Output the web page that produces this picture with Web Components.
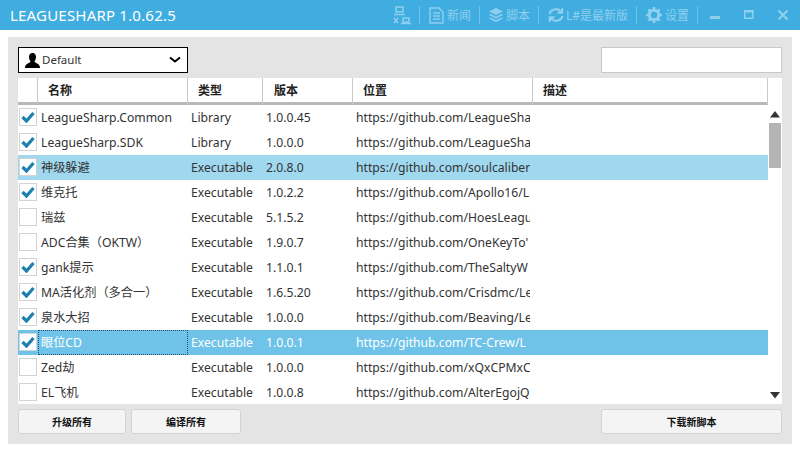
<!DOCTYPE html>
<html><head><meta charset="utf-8"><style>
html,body{margin:0;padding:0;background:#fff}
body{width:800px;height:450px;overflow:hidden;font-family:"Noto Sans","Noto Sans CJK SC",sans-serif}
</style></head><body>
<ls-app></ls-app>
<script>
const F='"Noto Sans","Noto Sans CJK SC",sans-serif';
class LsTitle extends HTMLElement{constructor(){super();this.attachShadow({mode:'open'}).innerHTML=`<style>
:host{display:flex;height:30px;background:#3fade0;align-items:center;color:#fff;font-family:${F}}
.t{font-size:15px;padding-left:10px;flex:1;white-space:nowrap;letter-spacing:.2px}
.n{display:flex;align-items:center;color:#8fd0ee;font-size:12px;height:30px}
.n svg{display:block}
.i{display:flex;align-items:center;gap:2px}
.s{width:1px;height:18px;background:#70c2e8;margin:0 8px 0 8px}
.s.l{margin-right:0}
.w{display:flex;align-items:center;justify-content:center;width:34px}
</style><div class="t">LEAGUESHARP 1.0.62.5</div><div class="n">
<div class="i"><svg width="18" height="20" viewBox="0 0 18 20" fill="none" stroke="#8fd0ee" stroke-width="1.500"><rect x="3" y="2" width="7" height="5"/><path d="M1 9.500h11"/><rect x="10" y="13" width="6" height="4"/><path d="M8 18.500h10M1 13l4 5M5 13l-4 5"/></svg></div><div class="s"></div>
<div class="i"><svg width="17" height="17" viewBox="0 0 17 17" fill="none" stroke="#8fd0ee" stroke-width="1.400"><path d="M2 1h9l4 4v11H2z"/><path d="M5 6h7M5 9h7M5 12h7"/></svg>新闻</div><div class="s"></div>
<div class="i"><svg width="16" height="16" viewBox="0 0 16 16" fill="#8fd0ee"><path d="M8 1l7 3.500L8 8 1 4.500z"/><path d="M2.500 7L8 9.800 13.500 7 15 8 8 11.500 1 8z"/><path d="M2.500 10.500L8 13.300l5.500-2.800L15 11.500 8 15 1 11.500z"/></svg>脚本</div><div class="s"></div>
<div class="i" style="gap:1px"><svg width="18" height="16" viewBox="0 0 17 16" fill="none" stroke="#8fd0ee" stroke-width="2.200"><path d="M2 7a6.500 6 0 0 1 11-3M15 9a6.500 6 0 0 1-11 3"/><path d="M15 1v5h-5M2 15v-5h5" stroke-width="1.500" fill="#8fd0ee"/></svg>L#是最新版</div><div class="s"></div>
<div class="i"><svg width="18" height="18" viewBox="0 0 17 17"><circle cx="8.500" cy="8.500" r="4.500" fill="none" stroke="#8fd0ee" stroke-width="3"/><path d="M8.500 1v3M8.500 13v3M1 8.500h3M13 8.500h3M3.200 3.200l2 2M11.800 11.800l2 2M13.800 3.200l-2 2M5.200 11.800l-2 2" stroke="#8fd0ee" stroke-width="2.400"/></svg>设置</div><div class="s l"></div>
<div class="w"><svg width="10" height="10"><rect y="6" width="10" height="3" fill="#8fd0ee"/></svg></div>
<div class="w"><svg width="10" height="10"><rect x=".75" y=".75" width="8" height="7.500" fill="none" stroke="#8fd0ee" stroke-width="1.500"/><rect x="0" y="0" width="9.500" height="2.500" fill="#8fd0ee"/></svg></div>
<div class="w"><svg width="12" height="12" stroke="#8fd0ee" stroke-width="2.200"><path d="M1.500 1.500l9 9M10.500 1.500l-9 9"/></svg></div>
</div>`}}
customElements.define('ls-title',LsTitle);

class LsBtn extends HTMLElement{constructor(){super();this.attachShadow({mode:'open'}).innerHTML=`<style>
:host{display:flex;align-items:center;justify-content:center;height:25px;box-sizing:border-box;background:#f4f4f4;border:1px solid #d4d4d4;border-radius:3px;font-size:10px;color:#111;font-weight:600;font-family:${F}}
</style><slot></slot>`}}
customElements.define('ls-btn',LsBtn);

class LsCheck extends HTMLElement{constructor(){super();const on=this.hasAttribute('on');this.attachShadow({mode:'open'}).innerHTML=`<style>
:host{display:flex;width:18px;height:18px;box-sizing:border-box;background:#fff;border:1px solid #d2d2d2;align-items:center;justify-content:center}
</style>${on?'<svg width="14" height="12" viewBox="0 0 14 12"><path d="M1.500 6l4 4L12.500 2" fill="none" stroke="#1f7fae" stroke-width="3.200"/></svg>':''}`}}
customElements.define('ls-check',LsCheck);

class LsRow extends HTMLElement{constructor(){super();const d=this.dataset;this.attachShadow({mode:'open'}).innerHTML=`<style>
:host{display:grid;grid-template-columns:20px 150px 75px 90px 177px;width:750px;height:25px;align-items:center;font-size:12.2px;color:#333;font-family:${F};white-space:nowrap;overflow:hidden;box-sizing:border-box}
:host([sel]){background:#a0d8ef}
:host([cur]){background:#6fc3e9;color:#fff}
ls-check{margin-left:1px;margin-top:-1px}
div{overflow:hidden;height:25px;line-height:25px;box-sizing:border-box}
.n{padding-left:3px}.ty{padding-left:3px}.v{padding-left:3px}.u{padding-left:3px}
:host([cur]) .n{outline:1px dotted #1d4f6e;outline-offset:-1px}
</style><ls-check ${d.on?'on':''}></ls-check><div class="n">${d.n}</div><div class="ty">${d.t}</div><div class="v">${d.v}</div><div class="u">${d.u}</div>`}}
customElements.define('ls-row',LsRow);

class LsList extends HTMLElement{constructor(){super();this.attachShadow({mode:'open'}).innerHTML=`<style>
:host{display:block;position:relative;background:#fff;height:326px;overflow:hidden;font-family:${F}}
.h{display:grid;grid-template-columns:20px 150px 75px 90px 180px 1fr;width:750px;height:27px;box-sizing:border-box;border-bottom:3px solid #b8b8b8;font-size:12px;font-weight:600;color:#222}
.h div{border-right:1px solid #c9c9c9;padding-left:10px;line-height:26px;box-sizing:border-box}
.h div:nth-child(1){padding:0}
.h div:nth-child(4){padding-left:11px}
.th{position:absolute;left:751px;top:45px;width:12px;height:45px;background:#b4b4b4}
.a{position:absolute;left:751px}
</style><div class="h"><div></div><div>名称</div><div>类型</div><div>版本</div><div>位置</div><div>描述</div></div>
<slot></slot>
<svg class="a" style="top:32px" width="12" height="8"><path d="M1 7.500L6 1l5 6.500z" fill="#333"/></svg>
<div class="th"></div>
<svg class="a" style="top:313px" width="12" height="8"><path d="M1 1L6 7.500 11 1z" fill="#333"/></svg>`}}
customElements.define('ls-list',LsList);

const rows=[
['LeagueSharp.Common','Library','1.0.0.45','https://github.com/LeagueSha',1],
['LeagueSharp.SDK','Library','1.0.0.0','https://github.com/LeagueSha',1],
['神级躲避','Executable','2.0.8.0','https://github.com/soulcaliber',1,'sel'],
['维克托','Executable','1.0.2.2','https://github.com/Apollo16/L',1],
['瑞兹','Executable','5.1.5.2','https://github.com/HoesLeagu',0],
['ADC合集（OKTW）','Executable','1.9.0.7','https://github.com/OneKeyTo\'',0],
['gank提示','Executable','1.1.0.1','https://github.com/TheSaltyW',1],
['MA活化剂（多合一）','Executable','1.6.5.20','https://github.com/Crisdmc/Le',1],
['泉水大招','Executable','1.0.0.0','https://github.com/Beaving/Le',1],
['眼位CD','Executable','1.0.0.1','https://github.com/TC-Crew/L',1,'cur'],
['Zed劫','Executable','1.0.0.0','https://github.com/xQxCPMxC',0],
['EL飞机','Executable','1.0.0.8','https://github.com/AlterEgojQ',0]];
class LsApp extends HTMLElement{constructor(){super();this.attachShadow({mode:'open'}).innerHTML=`<style>
:host{display:block;width:800px;height:450px;font-family:${F}}
.p{margin:7px 8px 0;height:407px;box-sizing:border-box;background:#e4e4e4;padding:10px;display:flex;flex-direction:column}
.top{display:flex;justify-content:space-between;height:26px;margin-bottom:5px}
.combo{width:170px;height:26px;box-sizing:border-box;border:1px solid #000;background:#fff;display:flex;align-items:center;font-size:11.500px;color:#333;padding:0 6px 0 5px;gap:1px}
.combo span{flex:1;margin-top:-2px}
.s{width:181px;height:26px;box-sizing:border-box;background:#fff;border:1px solid #c8c8c8}
.bot{display:flex;margin-top:5px;gap:5px}
</style><ls-title></ls-title><div class="p"><div class="top"><div class="combo"><svg width="17" height="17" viewBox="0 0 16 17"><path d="M8 1c2.500 0 3.500 2 3.500 4S10.500 8.500 10 9.500c0 1.500 5.500 2 5.500 6V16H.5v-.5c0-4 5.500-4.500 5.500-6C5.500 8.500 4.500 7 4.500 5S5.500 1 8 1z"/></svg><span>Default</span><svg width="12" height="8" viewBox="0 0 12 8"><path d="M1 1.500l5 4 5-4" fill="none" stroke="#000" stroke-width="2"/></svg></div><div class="s"></div></div>
<ls-list>${rows.map(r=>`<ls-row ${r[5]||''} data-n="${r[0]}" data-t="${r[1]}" data-v="${r[2]}" data-u="${r[3]}" ${r[4]?'data-on="1"':''}></ls-row>`).join('')}</ls-list>
<div class="bot"><ls-btn style="width:108px">升级所有</ls-btn><ls-btn style="width:110px">编译所有</ls-btn><ls-btn style="width:181px;margin-left:auto">下载新脚本</ls-btn></div></div>`}}
customElements.define('ls-app',LsApp);
</script></body></html>
